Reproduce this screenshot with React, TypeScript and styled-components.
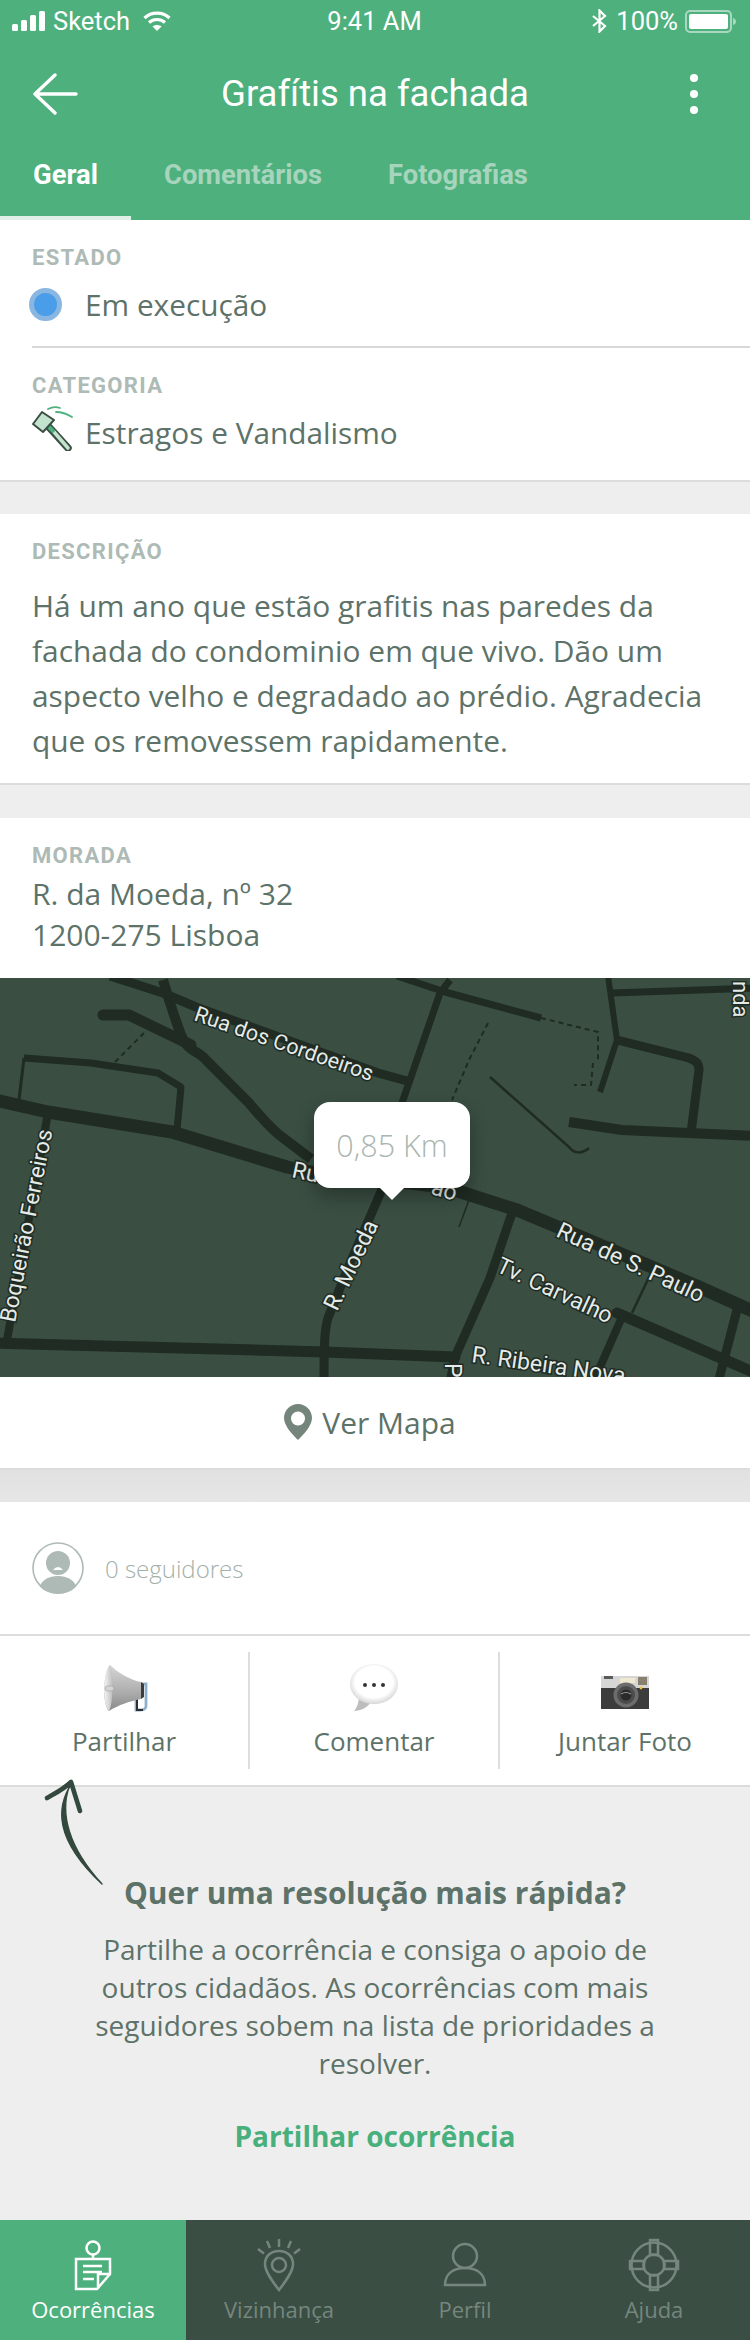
import React from "react";
import styled, { createGlobalStyle } from "styled-components";

const Global = createGlobalStyle`
  html, body { margin: 0; padding: 0; background: #eeeeee; }
  * { box-sizing: border-box; }
`;

const SANS = `"Open Sans", "Liberation Sans", sans-serif`;
const NARROW = `"Liberation Sans Narrow", Roboto, sans-serif`;

const Page = styled.div`
  width: 750px;
  height: 2340px;
  overflow: hidden;
  background: #eeeeee;
  font-family: ${SANS};
  color: #5d7268;
`;

const Header = styled.header`
  height: 220px;
  background: #4eb07d;
  color: #fff;
`;
const StatusBar = styled.div`
  height: 44px;
  display: grid;
  grid-template-columns: 1fr auto 1fr;
  align-items: center;
  padding: 0 13px 2px 12px;
  font: 400 25.5px Roboto, sans-serif;
`;
const StatusSide = styled.div<{ $end?: boolean }>`
  display: flex;
  align-items: center;
  gap: 8px;
  justify-content: ${(p) => (p.$end ? "flex-end" : "flex-start")};
`;
const NavBar = styled.div`
  height: 100px;
  padding: 0 32px;
  display: flex;
  align-items: center;
  justify-content: space-between;
`;
const Title = styled.h1`
  margin: 0;
  font: 400 36.5px/1 ${NARROW};
`;
const Tabs = styled.nav`
  height: 76px;
  display: flex;
`;
const Tab = styled.div<{ $active?: boolean }>`
  padding: 0 33px;
  height: 76px;
  font: 700 27.4px/62px ${NARROW};
  color: ${(p) => (p.$active ? "#fff" : "#a6d4bc")};
  border-bottom: 4px solid ${(p) => (p.$active ? "#def0e7" : "transparent")};
`;

const Section = styled.section`
  background: #fff;
  border-bottom: 2px solid #dcdcdc;
`;
const Gap = styled.div<{ $h: number; $shade?: boolean }>`
  height: ${(p) => p.$h}px;
  background: ${(p) =>
    p.$shade ? "linear-gradient(#e1e1e1, #e6e6e6)" : "#eeeeee"};
`;
const Field = styled.div<{ $h: number; $rule?: boolean }>`
  height: ${(p) => p.$h}px;
  margin-left: 32px;
  padding-top: 26px;
  border-bottom: ${(p) => (p.$rule ? "2px solid #d8d8d8" : "none")};
`;
const Label = styled.div`
  font: 700 22px/24px ${NARROW};
  letter-spacing: 1.3px;
  color: #aebab5;
  text-transform: uppercase;
`;
const ValueRow = styled.div<{ $mt: number }>`
  display: flex;
  align-items: center;
  height: 44px;
  margin-top: ${(p) => p.$mt}px;
  font-size: 29.8px;
  margin-left: -3px;
`;
const Dot = styled.span`
  width: 33px;
  height: 33px;
  border-radius: 50%;
  background: #4a9de8;
  border: 5px solid #8ab6e2;
  margin-right: 23px;
`;
const HammerIcon = styled.svg`
  width: 42px;
  height: 46px;
  margin: -9px 11px 0 3px;
  flex: none;
`;
const Body = styled.p`
  margin: 19px 0 0;
  font-size: 29.9px;
  line-height: 45px;
`;
const Address = styled.p`
  margin: 5px 0 0;
  font-size: 30px;
  line-height: 41px;
`;
const MapBox = styled.div`
  position: relative;
  height: 399px;
  background: #3a4e42;
  overflow: hidden;
`;
const MapArt = styled.svg`
  display: block;
  width: 750px;
  height: 399px;
`;
const Bubble = styled.div`
  position: absolute;
  left: 314px;
  top: 124px;
  width: 156px;
  height: 86px;
  border-radius: 16px;
  background: #fff;
  color: #aab5af;
  font-size: 30.5px;
  font-weight: 300;
  display: flex;
  align-items: center;
  justify-content: center;
  box-shadow: 0 8px 18px rgba(0, 0, 0, 0.3);
  &::after {
    content: "";
    position: absolute;
    left: 66px;
    bottom: -12px;
    border-left: 12px solid transparent;
    border-right: 12px solid transparent;
    border-top: 12px solid #fff;
  }
`;
const MapLink = styled.div`
  height: 91px;
  display: flex;
  align-items: center;
  justify-content: center;
  gap: 10px;
  font-size: 30px;
  padding: 0 10px 1px 0;
`;
const Followers = styled.div`
  height: 132px;
  display: flex;
  align-items: center;
  gap: 21px;
  padding-left: 32px;
  font-size: 24px;
  font-weight: 300;
  color: #a4b0aa;
`;
const Actions = styled.div`
  height: 149px;
  padding-top: 16px;
  display: grid;
  grid-template-columns: 250px 250px 250px;
  align-items: start;
`;
const Action = styled.div<{ $rule?: boolean }>`
  height: 117px;
  display: flex;
  flex-direction: column;
  align-items: center;
  font-size: 26px;
  line-height: 36px;
  border-right: ${(p) => (p.$rule ? "2px solid #dedede" : "none")};
`;
const ActionIcon = styled.svg`
  width: 50px;
  height: 48px;
  margin: 12px 0 11px;
  flex: none;
`;
const Promo = styled.div`
  position: relative;
  height: 433px;
  padding-top: 84px;
  text-align: center;
`;
const Arrow = styled.svg`
  position: absolute;
  left: 40px;
  top: -10px;
  width: 70px;
  height: 115px;
`;
const PromoTitle = styled.h2`
  margin: 0;
  font-size: 30px;
  line-height: 44px;
  font-weight: 700;
`;
const PromoText = styled.p`
  margin: 15px 0 0;
  font-size: 28px;
  line-height: 38px;
`;
const PromoLink = styled.div`
  margin-top: 32px;
  font-size: 28px;
  line-height: 44px;
  font-weight: 700;
  color: #47b07c;
`;
const TabBar = styled.nav`
  height: 120px;
  background: #3a4e43;
  display: grid;
  grid-template-columns: 186px 186px 186px 192px;
`;
const BarItem = styled.div<{ $active?: boolean }>`
  display: flex;
  flex-direction: column;
  align-items: center;
  padding-top: 18px;
  background: ${(p) => (p.$active ? "#4eb07d" : "transparent")};
  color: ${(p) => (p.$active ? "#fff" : "#76867e")};
  font-size: 22px;
  line-height: 30px;
`;
const BarIcon = styled.svg`
  width: 56px;
  height: 56px;
  margin-bottom: 0;
  fill: none;
  stroke: currentColor;
  stroke-width: 2.5;
`;

const roads: [string, number][] = [
  ["M-5 122 L48 134 L172 154 L287 189 L311 194 L445 209 L517 232 L560 250 L699 309 L755 334", 13],
  ["M163 2 C170 25 176 45 182 59 C188 74 198 72 206 82 L249 125 C262 140 270 150 282 159 L311 181", 10],
  ["M103 37 L129 37 L191 67", 11],
  ["M110 -2 L163 15 L196 29 L378 95 L411 104", 9],
  ["M450 2 L440 15 L411 99 L402 125", 7],
  ["M397 -2 L445 14 L541 40", 7],
  ["M24 80 L91 85 L158 95 L181 109 L177 152", 7],
  ["M24 80 L19 122", 3],
  ["M48 135 L7 362", 8],
  ["M-5 365 L325 374 L455 379", 11],
  ["M383 209 L350 285 L328 340 C325 350 324 360 324 405", 9],
  ["M512 235 L490 300 L455 379 L450 405", 9],
  ["M617 335 L755 395", 11],
  ["M622 339 L593 405", 8],
  ["M651 295 L632 335", 2.5],
  ["M737 332 L718 405", 9],
  ["M608 -2 L617 62 L600 114", 6],
  ["M617 62 L689 80 C697 83 699 86 699 92 L691 155", 9],
  ["M612 15 L755 10", 7],
  ["M569 144 L622 152 L755 158", 10],
  ["M490 99 L569 169 C574 176 582 176 589 170", 2.5],
  ["M469 222 L459 249", 1.5],
];
const dashed: string[] = [
  "M144 55 L112 87",
  "M541 40 L598 54 L598 85",
  "M488 45 L469 82 L452 122",
  "M593 85 L591 107 L574 107",
];
const labels: [string, number, number, number, number][] = [
  ["Rua dos Cordoeiros", 193, 42, 19, 21.5],
  ["Boqueirão Ferreiros", 15, 345, -79, 22.5],
  ["R. Moeda", 337, 334, -64.5, 23],
  ["Rua de S. Paulo", 555, 258, 24.8, 23],
  ["Tv. Carvalho", 495, 293, 25, 23],
  ["R. Ribeira Nova", 471, 384, 8, 23],
  ["Ru", 291, 199, 12, 23],
  ["ão", 430, 216, 15, 23],
  ["P", 445, 385, 90, 23],
  ["nda", 733, 3, 90, 22],
];

const MapLabel = styled.text<{ $size: number }>`
  font: 400 ${(p) => p.$size}px Roboto, sans-serif;
  fill: #e6ebe8;
  stroke: #1f2b23;
  stroke-width: 3px;
  paint-order: stroke;
`;

const CityMap = () => (
  <MapArt viewBox="0 0 750 399">
    <g fill="none" stroke="#1f2b23" strokeLinejoin="round">
      {roads.map(([d, w]) => (
        <path key={d} d={d} strokeWidth={w} strokeLinecap={w === 11 ? "round" : "butt"} />
      ))}
      {dashed.map((d) => (
        <path key={d} d={d} strokeWidth={2} strokeDasharray="5 4" />
      ))}
    </g>
    {labels.map(([t, x, y, r, s]) => (
      <MapLabel key={t} $size={s} x={x} y={y} transform={`rotate(${r} ${x} ${y})`}>
        {t}
      </MapLabel>
    ))}
  </MapArt>
);

export default function App() {
  return (
    <Page>
      <Global />
      <Header>
        <StatusBar>
          <StatusSide>
            <svg width="33" height="20" viewBox="0 0 33 20" fill="#fff">
              <rect x="0" y="13" width="6" height="7" rx="1.5" />
              <rect x="9" y="9" width="6" height="11" rx="1.5" />
              <rect x="18" y="4" width="6" height="16" rx="1.5" />
              <rect x="27" y="0" width="6" height="20" rx="1.5" />
            </svg>
            <span>Sketch</span>
            <svg width="28" height="20" viewBox="0 0 28 20" fill="none" stroke="#fff" strokeWidth="3.2" style={{ marginLeft: 5 }}>
              <path d="M1.5 7 C8.5 0.5 19.5 0.5 26.5 7" />
              <path d="M6 11.5 C10.5 7.5 17.5 7.5 22 11.5" />
              <path d="M14 20 L9.5 15.5 C12 13.5 16 13.5 18.5 15.5 Z" fill="#fff" stroke="none" />
            </svg>
          </StatusSide>
          <span>9:41 AM</span>
          <StatusSide $end>
            <svg width="15" height="24" viewBox="0 0 15 24" fill="none" stroke="#fff" strokeWidth="2.2">
              <path d="M1 7 L13 17 L7.5 22.5 V1.5 L13 7 L1 17" />
            </svg>
            <span style={{ marginLeft: 1 }}>100%</span>
            <svg width="52" height="23" viewBox="0 0 52 23" style={{ marginLeft: -1 }}>
              <rect x="1" y="1" width="45" height="21" rx="4" fill="none" stroke="#a9d8c0" strokeWidth="2" />
              <rect x="4" y="4" width="39" height="15" rx="2" fill="#fff" />
              <path d="M48 8 C50 8.5 51 10 51 11.5 C51 13 50 14.5 48 15 Z" fill="#a9d8c0" />
            </svg>
          </StatusSide>
        </StatusBar>
        <NavBar>
          <svg width="46" height="42" viewBox="0 0 46 42" fill="none" stroke="#fff" strokeWidth="3.4" strokeLinecap="round" strokeLinejoin="round">
            <path d="M23 2 L3 21 L23 40 M3 21 H44" />
          </svg>
          <Title>Grafítis na fachada</Title>
          <svg width="46" height="42" viewBox="0 0 46 42" fill="#fff">
            <circle cx="22" cy="5" r="4" />
            <circle cx="22" cy="21" r="4" />
            <circle cx="22" cy="37" r="4" />
          </svg>
        </NavBar>
        <Tabs>
          <Tab $active>Geral</Tab>
          <Tab>Comentários</Tab>
          <Tab>Fotografias</Tab>
        </Tabs>
      </Header>

      <Section>
        <Field $h={128} $rule>
          <Label>Estado</Label>
          <ValueRow $mt={12}>
            <Dot />
            Em execução
          </ValueRow>
        </Field>
        <Field $h={132}>
          <Label>Categoria</Label>
          <ValueRow $mt={12}>
            <HammerIcon viewBox="0 0 42 46">
              <path d="M16 4 Q22 1 28 3 M24 7 Q32 7 40 12" fill="none" stroke="#4eb07d" strokeWidth="1.8" strokeLinecap="round" />
              <path d="M16 21 L36 43" stroke="#3a4e43" strokeWidth="7.5" strokeLinecap="round" />
              <path d="M22 27 L36 43" stroke="#c3e3cf" strokeWidth="3.6" strokeLinecap="round" />
              <path d="M16 21 L22 27" stroke="#4eb07d" strokeWidth="4" />
              <path d="M1 19 L10 7 L22 15 L11 27 Z" fill="#c3e3cf" stroke="#3a4e43" strokeWidth="2" strokeLinejoin="round" />
            </HammerIcon>
            Estragos e Vandalismo
          </ValueRow>
        </Field>
      </Section>
      <Gap $h={32} />

      <Section>
        <Field $h={269}>
          <Label>Descrição</Label>
          <Body>
            Há um ano que estão grafitis nas paredes da
            <br />
            fachada do condominio em que vivo. Dão um
            <br />
            aspecto velho e degradado ao prédio. Agradecia
            <br />
            que os removessem rapidamente.
          </Body>
        </Field>
      </Section>
      <Gap $h={33} />

      <Section>
        <Field $h={160}>
          <Label>Morada</Label>
          <Address>
            R. da Moeda, nº 32
            <br />
            1200-275 Lisboa
          </Address>
        </Field>
        <MapBox>
          <CityMap />
          <Bubble>0,85 Km</Bubble>
        </MapBox>
        <MapLink>
          <svg width="28" height="36" viewBox="0 0 28 36">
            <path fillRule="evenodd" fill="#74857c" d="M14 0 C22 0 28 6.5 28 14 C28 22 19 31 14 36 C9 31 0 22 0 14 C0 6.5 6 0 14 0 Z M14 7.5 A7 7 0 1 0 14.01 21.5 A7 7 0 1 0 14 7.5 Z" />
          </svg>
          Ver Mapa
        </MapLink>
      </Section>
      <Gap $h={32} $shade />

      <Section>
        <Followers>
          <svg width="52" height="52" viewBox="0 0 52 52">
            <defs>
              <clipPath id="av">
                <circle cx="26" cy="26" r="26" />
              </clipPath>
            </defs>
            <circle cx="26" cy="26" r="25" fill="none" stroke="#aebab5" strokeWidth="1.6" />
            <g clipPath="url(#av)" fill="#aebab5">
              <circle cx="26" cy="21" r="12" />
              <ellipse cx="26" cy="48" rx="19" ry="14" />
            </g>
            <path d="M21 28 Q26 22 31 28 Z" fill="#fff" />
          </svg>
          0 seguidores
        </Followers>
      </Section>

      <Section>
        <Actions>
          <Action $rule>
            <ActionIcon viewBox="0 0 50 48">
              <defs>
                <linearGradient id="cone" x1="0" y1="0" x2="0" y2="1">
                  <stop offset="0" stopColor="#d6d6d6" />
                  <stop offset="0.55" stopColor="#b0b0b0" />
                  <stop offset="1" stopColor="#8a8a8a" />
                </linearGradient>
                <linearGradient id="lip" x1="0" y1="0" x2="1" y2="0">
                  <stop offset="0" stopColor="#f4f4f4" />
                  <stop offset="1" stopColor="#bdbdbd" />
                </linearGradient>
              </defs>
              <path d="M42 20 H47 V42 C47 45 44 46 41 46 H37 V34" fill="none" stroke="#8fb0cc" strokeWidth="2.8" />
              <path d="M38 32 V46 H44" fill="none" stroke="#2f2f2f" strokeWidth="2" />
              <path d="M42 18 L45 20 V33 L42 35 Z" fill="#3c3c3c" />
              <path d="M11 1 C17 7 30 16 42 18 L42 35 C32 37 19 41 10 47 C3 40 4 8 11 1 Z" fill="url(#cone)" />
              <path d="M11 1 C4 8 3 40 10 47 C14 40 15 10 11 1 Z" fill="url(#lip)" />
              <rect x="6" y="22" width="9" height="5" rx="2.5" fill="#d4d4d4" stroke="#9a9a9a" strokeWidth="0.6" />
            </ActionIcon>
            Partilhar
          </Action>
          <Action $rule>
            <ActionIcon viewBox="0 0 50 48">
              <defs>
                <radialGradient id="bub" cx="0.5" cy="0.45" r="0.6">
                  <stop offset="0.65" stopColor="#ffffff" />
                  <stop offset="1" stopColor="#c9c9c9" />
                </radialGradient>
              </defs>
              <path d="M10 32 C10 38 8 44 5 47 C12 47 19 43 22 38 Z" fill="#bdbdbd" />
              <ellipse cx="25" cy="20" rx="24" ry="20" fill="url(#bub)" />
              <circle cx="16" cy="21" r="2" fill="#333" />
              <circle cx="25" cy="21" r="2" fill="#333" />
              <circle cx="34" cy="21" r="2" fill="#333" />
            </ActionIcon>
            Comentar
          </Action>
          <Action>
            <ActionIcon viewBox="0 0 50 48">
              <rect x="1" y="12" width="48" height="13" fill="#d6d6d6" />
              <rect x="1" y="24" width="48" height="21" fill="#3c3c3c" />
              <rect x="4" y="12" width="9" height="3" fill="#5a5a5a" />
              <rect x="20" y="14" width="15" height="5" fill="#f0e9d2" />
              <rect x="38" y="13" width="9" height="8" fill="#8a8070" />
              <circle cx="41" cy="24" r="1.4" fill="#f2c230" />
              <circle cx="26" cy="31" r="12.5" fill="#6d6d6d" />
              <circle cx="26" cy="31" r="9" fill="#4c4c4c" />
              <circle cx="26" cy="31" r="5.5" fill="#2a2a2a" />
              <path d="M21 30 Q26 27 31 30" stroke="#999" strokeWidth="1.2" fill="none" />
            </ActionIcon>
            Juntar Foto
          </Action>
        </Actions>
      </Section>

      <Promo>
        <Arrow viewBox="0 0 70 115">
          <path d="M32 6 C16 30 14 62 62 107 C28 70 20 36 29 10 Z" fill="#34493e" stroke="#34493e" strokeWidth="1.5" strokeLinejoin="round" />
          <path d="M7 21 C14 17 24 12 31 5 L40 34" fill="none" stroke="#34493e" strokeWidth="4.6" strokeLinecap="round" strokeLinejoin="round" />
        </Arrow>
        <PromoTitle>Quer uma resolução mais rápida?</PromoTitle>
        <PromoText>
          Partilhe a ocorrência e consiga o apoio de
          <br />
          outros cidadãos. As ocorrências com mais
          <br />
          seguidores sobem na lista de prioridades a
          <br />
          resolver.
        </PromoText>
        <PromoLink>Partilhar ocorrência</PromoLink>
      </Promo>

      <TabBar>
        <BarItem $active>
          <BarIcon viewBox="0 0 56 56">
            <circle cx="28" cy="10" r="6.5" />
            <path d="M28 16.5 V21" />
            <path d="M11 21 H45 V36 L32 51 H11 Z M45 36 H33 V51" strokeLinejoin="miter" />
            <path d="M18 28 H37 M18 34 H37 M18 41 H29" />
          </BarIcon>
          Ocorrências
        </BarItem>
        <BarItem>
          <BarIcon viewBox="0 0 56 56">
            <path d="M28 52 C22 44 14 34 14 26 C14 18 20 13 28 13 C36 13 42 18 42 26 C42 34 34 44 28 52 Z" />
            <circle cx="28" cy="27" r="7" />
            <path d="M28 1 V9 M16 3 L19 10 M40 3 L37 10 M7 11 L13 15.5 M49 11 L43 15.5" />
          </BarIcon>
          Vizinhança
        </BarItem>
        <BarItem>
          <BarIcon viewBox="0 0 56 56">
            <circle cx="28" cy="18" r="12" />
            <path d="M8 47 C8 36 16 30 28 30 C40 30 48 36 48 47 Z" />
          </BarIcon>
          Perfil
        </BarItem>
        <BarItem>
          <BarIcon viewBox="0 0 56 56">
            <circle cx="28" cy="27" r="22.5" />
            <circle cx="28" cy="27" r="10.5" />
            <path d="M24 2 H32 V17 H24 Z M24 37 H32 V52 H24 Z M4 23 H18 V31 H4 Z M38 23 H52 V31 H38 Z" />
          </BarIcon>
          Ajuda
        </BarItem>
      </TabBar>
    </Page>
  );
}
